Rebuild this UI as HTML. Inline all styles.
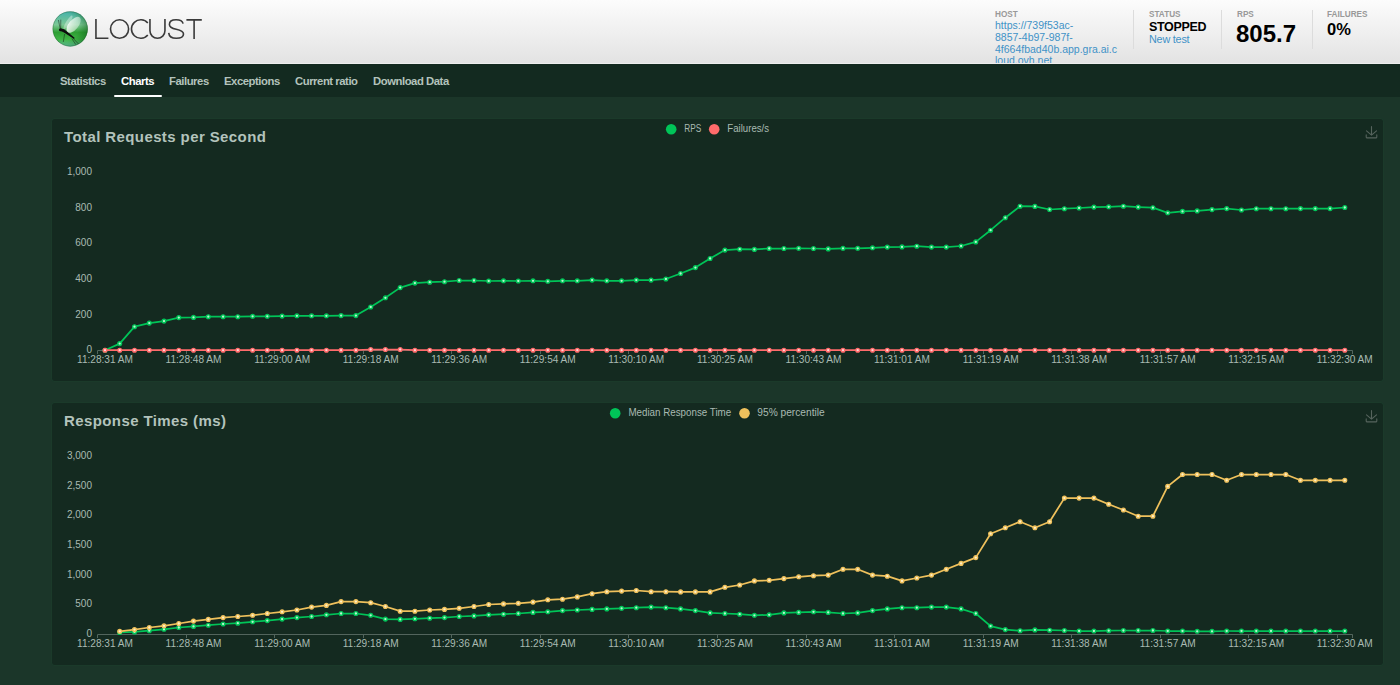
<!DOCTYPE html>
<html><head><meta charset="utf-8">
<style>
*{margin:0;padding:0;box-sizing:border-box}
html,body{width:1400px;height:685px;overflow:hidden}
body{background:#1b3629;font-family:"Liberation Sans",sans-serif;position:relative}
.top{position:absolute;left:0;top:0;width:1400px;height:64px;background:linear-gradient(#fcfcfc,#e3e3e3);overflow:hidden;border-bottom:1px solid #eeeeee}
.logo{position:absolute;left:50px;top:9px}
.wordmark{position:absolute;left:94px;top:17px;overflow:visible}
.box{position:absolute;top:0;height:64px}
.lbl{position:absolute;font-size:8.2px;font-weight:bold;color:#999}
.val{position:absolute;font-weight:bold;color:#000;white-space:nowrap}
.host{position:absolute;left:995px;top:20px;width:140px;font-size:10.5px;line-height:11.8px;color:#4192c7;white-space:nowrap}
.div{position:absolute;top:10px;width:1px;height:39px;background:#dcdcdc}
.nav{position:absolute;left:0;top:64px;width:1400px;height:33px;background:#132a20}
.tab{position:absolute;top:10.5px;font-size:11.3px;font-weight:bold;color:#b3c3bc;white-space:nowrap;letter-spacing:-0.45px}
.tab.on{color:#fff}
.uline{position:absolute;left:114px;top:95px;width:48px;height:2px;background:#fff;border-radius:1px}
.panel{position:absolute;left:52px;width:1331px;height:262px;background:#142a20;border-radius:3px;overflow:hidden;box-shadow:0 0 0 1px rgba(30,75,50,0.2)}
svg text{font-family:"Liberation Sans",sans-serif}
.title{font-size:15px;font-weight:bold;fill:#b3c3bc;letter-spacing:0.4px}
.yl{font-size:10px;fill:#a9bab2;text-anchor:end}
.xl{font-size:10.1px;fill:#a9bab2;text-anchor:middle}
.lg{font-size:10px;fill:#a9bab2}
</style></head><body>
<div class="top">
  <svg class="logo" width="40" height="40" viewBox="0 0 40 40">
    <defs>
      <linearGradient id="sph" x1="0" y1="0" x2="0" y2="1">
        <stop offset="0" stop-color="#45b3ae"/>
        <stop offset="0.22" stop-color="#66bf9c"/>
        <stop offset="0.38" stop-color="#7cc896"/>
        <stop offset="0.6" stop-color="#2e9e33"/>
        <stop offset="0.8" stop-color="#3fb545"/>
        <stop offset="0.92" stop-color="#5cc384"/>
        <stop offset="1" stop-color="#6ccdb0"/>
      </linearGradient>
      <radialGradient id="shd" cx="0.35" cy="0.45" r="0.7">
        <stop offset="0.55" stop-color="#0b5d16" stop-opacity="0"/>
        <stop offset="1" stop-color="#0b5d16" stop-opacity="0.55"/>
      </radialGradient>
      <linearGradient id="wng" x1="0" y1="1" x2="1" y2="0">
        <stop offset="0" stop-color="#ffffff" stop-opacity="0.95"/>
        <stop offset="1" stop-color="#e6f6e6" stop-opacity="0.35"/>
      </linearGradient>
    </defs>
    <circle cx="20.2" cy="19.9" r="17.5" fill="url(#sph)"/>
    <circle cx="20.2" cy="19.9" r="17.5" fill="url(#shd)"/>
    <circle cx="20.2" cy="19.9" r="17.3" fill="none" stroke="#0e4a1c" stroke-opacity="0.55" stroke-width="0.6"/>
    <ellipse cx="23.6" cy="15.8" rx="4.8" ry="9.6" transform="rotate(40 23.6 15.8)" fill="url(#wng)"/>
    <ellipse cx="18" cy="13.5" rx="2" ry="8" transform="rotate(32 18 13.5)" fill="#ffffff" fill-opacity="0.35"/>
    <g fill="#0d0d0d">
      <ellipse cx="10.5" cy="20.8" rx="1.6" ry="1.5"/>
      <path d="M10.8 19.5 L14.2 20.3 L16 21.8 L24.6 28.7 L24.1 29.9 L15.2 24.3 L13 23 L10.4 22 Z"/>
    </g>
    <g stroke="#0d0d0d" fill="none" stroke-width="0.45">
      <path d="M10.2 19.6 L8.4 11 M10.7 19.5 L10.8 10.6 M23 29.2 L28.5 35 M21.8 29.5 L25.8 35.6 M14.6 25 L13.3 33"/>
    </g>
  </svg>
  <svg class="wordmark" width="112" height="24" viewBox="0 -0.4 112 24">
    <g fill="none" stroke="#3a3a3a" stroke-width="1.6">
      <path d="M1.95 1.6V20.9H14.4"/>
      <ellipse cx="25.55" cy="11.65" rx="9.05" ry="9.25"/>
      <path d="M53.8 5.7A9.25 9.25 0 1 0 53.8 17.6"/>
      <path d="M55.95 1.6V13.4A7.5 7.5 0 0 0 70.95 13.4V1.6"/>
      <path d="M89.1 6.2C88.4 3.5 85.8 2.4 82.1 2.4C78.1 2.4 75.4 4.2 75.4 7C75.4 9.8 78 10.9 82.2 11.8C86.9 12.8 89.5 14.2 89.5 16.6C89.5 19.3 86.6 20.9 82.3 20.9C77.9 20.9 75.1 18.9 74.7 15.4"/>
      <path d="M92.4 2.45H107.8M100.1 2.45V21.7"/>
    </g>
  </svg>
  <div class="lbl" style="left:995px;top:10px">HOST</div>
  <div class="host">https://739f53ac-<br>8857-4b97-987f-<br>4f664fbad40b.app.gra.ai.c<br>loud.ovh.net</div>
  <div class="div" style="left:1133px"></div>
  <div class="lbl" style="left:1149px;top:10px">STATUS</div>
  <div class="val" style="left:1149px;top:19.5px;font-size:12.5px;letter-spacing:-0.33px">STOPPED</div>
  <div class="val" style="left:1149px;top:33.1px;font-size:10.8px;font-weight:normal;color:#4192c7;letter-spacing:-0.2px">New test</div>
  <div class="div" style="left:1221px"></div>
  <div class="lbl" style="left:1237px;top:10px">RPS</div>
  <div class="val" style="left:1236px;top:20.2px;font-size:24px">805.7</div>
  <div class="div" style="left:1312px"></div>
  <div class="lbl" style="left:1327px;top:10px">FAILURES</div>
  <div class="val" style="left:1327px;top:19.6px;font-size:16.5px">0%</div>
</div>
<div class="nav">
  <div class="tab" style="left:60px">Statistics</div>
  <div class="tab on" style="left:121px">Charts</div>
  <div class="tab" style="left:169px">Failures</div>
  <div class="tab" style="left:224px">Exceptions</div>
  <div class="tab" style="left:295px">Current ratio</div>
  <div class="tab" style="left:373px">Download Data</div>
</div>
<div class="uline"></div>
<div class="panel" style="top:119px">
<svg width="1331" height="262" viewBox="0 0 1331 262">
<text x="12" y="23" class="title">Total Requests per Second</text>
<text x="40" y="234.2" class="yl">0</text>
<text x="40" y="198.5" class="yl">200</text>
<text x="40" y="162.9" class="yl">400</text>
<text x="40" y="127.3" class="yl">600</text>
<text x="40" y="91.6" class="yl">800</text>
<text x="40" y="56.0" class="yl">1,000</text>
<path d="M45.6 231.5 H1300.6" stroke="#53655d" stroke-width="1"/>
<path d="M45.5 231.5V235.0M134.5 231.5V235.0M222.5 231.5V235.0M311.5 231.5V235.0M399.5 231.5V235.0M488.5 231.5V235.0M576.5 231.5V235.0M665.5 231.5V235.0M754.5 231.5V235.0M842.5 231.5V235.0M931.5 231.5V235.0M1019.5 231.5V235.0M1108.5 231.5V235.0M1196.5 231.5V235.0M1285.5 231.5V235.0M1300.5 231.5V235.0" stroke="#53655d" stroke-width="1"/>
<text x="53.0" y="244.1" class="xl">11:28:31 AM</text>
<text x="141.5" y="244.1" class="xl">11:28:48 AM</text>
<text x="230.1" y="244.1" class="xl">11:29:00 AM</text>
<text x="318.7" y="244.1" class="xl">11:29:18 AM</text>
<text x="407.2" y="244.1" class="xl">11:29:36 AM</text>
<text x="495.8" y="244.1" class="xl">11:29:54 AM</text>
<text x="584.3" y="244.1" class="xl">11:30:10 AM</text>
<text x="672.9" y="244.1" class="xl">11:30:25 AM</text>
<text x="761.5" y="244.1" class="xl">11:30:43 AM</text>
<text x="850.0" y="244.1" class="xl">11:31:01 AM</text>
<text x="938.6" y="244.1" class="xl">11:31:19 AM</text>
<text x="1027.1" y="244.1" class="xl">11:31:38 AM</text>
<text x="1115.7" y="244.1" class="xl">11:31:57 AM</text>
<text x="1204.3" y="244.1" class="xl">11:32:15 AM</text>
<text x="1292.8" y="244.1" class="xl">11:32:30 AM</text>
<path d="M53.0 231.2 L67.7 224.6 L82.5 207.7 L97.3 204.1 L112.0 202.1 L126.8 198.6 L141.5 198.4 L156.3 197.7 L171.1 197.7 L185.8 197.7 L200.6 197.3 L215.3 197.3 L230.1 197.1 L244.9 196.8 L259.6 196.8 L274.4 196.8 L289.1 196.6 L303.9 196.6 L318.7 188.0 L333.4 178.8 L348.2 168.6 L362.9 164.1 L377.7 163.2 L392.5 162.7 L407.2 161.5 L422.0 161.5 L436.7 162.0 L451.5 161.8 L466.3 162.0 L481.0 161.8 L495.8 162.3 L510.5 161.8 L525.3 161.8 L540.1 161.1 L554.8 161.8 L569.6 161.8 L584.3 161.1 L599.1 161.1 L613.9 160.0 L628.6 154.5 L643.4 148.6 L658.1 139.5 L672.9 131.1 L687.7 130.2 L702.4 130.4 L717.2 129.5 L731.9 129.5 L746.7 129.3 L761.5 129.5 L776.2 129.9 L791.0 129.3 L805.7 129.3 L820.5 128.8 L835.3 128.1 L850.0 127.9 L864.8 127.2 L879.5 128.1 L894.3 128.1 L909.1 127.0 L923.8 122.9 L938.6 111.2 L953.3 98.7 L968.1 87.2 L982.9 87.4 L997.6 90.5 L1012.4 89.7 L1027.1 89.0 L1041.9 88.1 L1056.7 87.8 L1071.4 87.2 L1086.2 88.1 L1100.9 88.7 L1115.7 93.8 L1130.5 92.4 L1145.2 91.9 L1160.0 90.6 L1174.7 89.6 L1189.5 91.0 L1204.3 89.7 L1219.0 89.7 L1233.8 89.7 L1248.5 89.6 L1263.3 89.6 L1278.1 89.6 L1292.8 88.5" fill="none" stroke="#00c458" stroke-width="1.75" stroke-linejoin="round"/><g fill="#b8f5cf" stroke="#00c458" stroke-width="1.4"><circle cx="53.0" cy="231.2" r="1.85"/><circle cx="67.7" cy="224.6" r="1.85"/><circle cx="82.5" cy="207.7" r="1.85"/><circle cx="97.3" cy="204.1" r="1.85"/><circle cx="112.0" cy="202.1" r="1.85"/><circle cx="126.8" cy="198.6" r="1.85"/><circle cx="141.5" cy="198.4" r="1.85"/><circle cx="156.3" cy="197.7" r="1.85"/><circle cx="171.1" cy="197.7" r="1.85"/><circle cx="185.8" cy="197.7" r="1.85"/><circle cx="200.6" cy="197.3" r="1.85"/><circle cx="215.3" cy="197.3" r="1.85"/><circle cx="230.1" cy="197.1" r="1.85"/><circle cx="244.9" cy="196.8" r="1.85"/><circle cx="259.6" cy="196.8" r="1.85"/><circle cx="274.4" cy="196.8" r="1.85"/><circle cx="289.1" cy="196.6" r="1.85"/><circle cx="303.9" cy="196.6" r="1.85"/><circle cx="318.7" cy="188.0" r="1.85"/><circle cx="333.4" cy="178.8" r="1.85"/><circle cx="348.2" cy="168.6" r="1.85"/><circle cx="362.9" cy="164.1" r="1.85"/><circle cx="377.7" cy="163.2" r="1.85"/><circle cx="392.5" cy="162.7" r="1.85"/><circle cx="407.2" cy="161.5" r="1.85"/><circle cx="422.0" cy="161.5" r="1.85"/><circle cx="436.7" cy="162.0" r="1.85"/><circle cx="451.5" cy="161.8" r="1.85"/><circle cx="466.3" cy="162.0" r="1.85"/><circle cx="481.0" cy="161.8" r="1.85"/><circle cx="495.8" cy="162.3" r="1.85"/><circle cx="510.5" cy="161.8" r="1.85"/><circle cx="525.3" cy="161.8" r="1.85"/><circle cx="540.1" cy="161.1" r="1.85"/><circle cx="554.8" cy="161.8" r="1.85"/><circle cx="569.6" cy="161.8" r="1.85"/><circle cx="584.3" cy="161.1" r="1.85"/><circle cx="599.1" cy="161.1" r="1.85"/><circle cx="613.9" cy="160.0" r="1.85"/><circle cx="628.6" cy="154.5" r="1.85"/><circle cx="643.4" cy="148.6" r="1.85"/><circle cx="658.1" cy="139.5" r="1.85"/><circle cx="672.9" cy="131.1" r="1.85"/><circle cx="687.7" cy="130.2" r="1.85"/><circle cx="702.4" cy="130.4" r="1.85"/><circle cx="717.2" cy="129.5" r="1.85"/><circle cx="731.9" cy="129.5" r="1.85"/><circle cx="746.7" cy="129.3" r="1.85"/><circle cx="761.5" cy="129.5" r="1.85"/><circle cx="776.2" cy="129.9" r="1.85"/><circle cx="791.0" cy="129.3" r="1.85"/><circle cx="805.7" cy="129.3" r="1.85"/><circle cx="820.5" cy="128.8" r="1.85"/><circle cx="835.3" cy="128.1" r="1.85"/><circle cx="850.0" cy="127.9" r="1.85"/><circle cx="864.8" cy="127.2" r="1.85"/><circle cx="879.5" cy="128.1" r="1.85"/><circle cx="894.3" cy="128.1" r="1.85"/><circle cx="909.1" cy="127.0" r="1.85"/><circle cx="923.8" cy="122.9" r="1.85"/><circle cx="938.6" cy="111.2" r="1.85"/><circle cx="953.3" cy="98.7" r="1.85"/><circle cx="968.1" cy="87.2" r="1.85"/><circle cx="982.9" cy="87.4" r="1.85"/><circle cx="997.6" cy="90.5" r="1.85"/><circle cx="1012.4" cy="89.7" r="1.85"/><circle cx="1027.1" cy="89.0" r="1.85"/><circle cx="1041.9" cy="88.1" r="1.85"/><circle cx="1056.7" cy="87.8" r="1.85"/><circle cx="1071.4" cy="87.2" r="1.85"/><circle cx="1086.2" cy="88.1" r="1.85"/><circle cx="1100.9" cy="88.7" r="1.85"/><circle cx="1115.7" cy="93.8" r="1.85"/><circle cx="1130.5" cy="92.4" r="1.85"/><circle cx="1145.2" cy="91.9" r="1.85"/><circle cx="1160.0" cy="90.6" r="1.85"/><circle cx="1174.7" cy="89.6" r="1.85"/><circle cx="1189.5" cy="91.0" r="1.85"/><circle cx="1204.3" cy="89.7" r="1.85"/><circle cx="1219.0" cy="89.7" r="1.85"/><circle cx="1233.8" cy="89.7" r="1.85"/><circle cx="1248.5" cy="89.6" r="1.85"/><circle cx="1263.3" cy="89.6" r="1.85"/><circle cx="1278.1" cy="89.6" r="1.85"/><circle cx="1292.8" cy="88.5" r="1.85"/></g><path d="M53.0 231.2 L67.7 231.2 L82.5 231.2 L97.3 231.2 L112.0 231.2 L126.8 231.2 L141.5 231.2 L156.3 231.2 L171.1 231.2 L185.8 231.2 L200.6 231.2 L215.3 231.2 L230.1 231.2 L244.9 231.2 L259.6 231.2 L274.4 231.2 L289.1 231.2 L303.9 231.2 L318.7 230.5 L333.4 230.5 L348.2 230.5 L362.9 231.2 L377.7 231.2 L392.5 231.2 L407.2 231.2 L422.0 231.2 L436.7 231.2 L451.5 231.2 L466.3 231.2 L481.0 231.2 L495.8 231.2 L510.5 231.2 L525.3 231.2 L540.1 231.2 L554.8 231.2 L569.6 231.2 L584.3 231.2 L599.1 231.2 L613.9 231.2 L628.6 231.2 L643.4 231.2 L658.1 231.2 L672.9 231.2 L687.7 231.2 L702.4 231.2 L717.2 231.2 L731.9 231.2 L746.7 231.2 L761.5 231.2 L776.2 231.2 L791.0 231.2 L805.7 231.2 L820.5 231.2 L835.3 231.2 L850.0 231.2 L864.8 231.2 L879.5 231.2 L894.3 231.2 L909.1 231.2 L923.8 231.2 L938.6 231.2 L953.3 231.2 L968.1 231.2 L982.9 231.2 L997.6 231.2 L1012.4 231.2 L1027.1 231.2 L1041.9 231.2 L1056.7 231.2 L1071.4 231.2 L1086.2 231.2 L1100.9 231.2 L1115.7 231.2 L1130.5 231.2 L1145.2 231.2 L1160.0 231.2 L1174.7 231.2 L1189.5 231.2 L1204.3 231.2 L1219.0 231.2 L1233.8 231.2 L1248.5 231.2 L1263.3 231.2 L1278.1 231.2 L1292.8 231.2" fill="none" stroke="#ff6b6b" stroke-width="1.75" stroke-linejoin="round"/><g fill="#ffd6d6" stroke="#ff6b6b" stroke-width="1.4"><circle cx="53.0" cy="231.2" r="1.85"/><circle cx="67.7" cy="231.2" r="1.85"/><circle cx="82.5" cy="231.2" r="1.85"/><circle cx="97.3" cy="231.2" r="1.85"/><circle cx="112.0" cy="231.2" r="1.85"/><circle cx="126.8" cy="231.2" r="1.85"/><circle cx="141.5" cy="231.2" r="1.85"/><circle cx="156.3" cy="231.2" r="1.85"/><circle cx="171.1" cy="231.2" r="1.85"/><circle cx="185.8" cy="231.2" r="1.85"/><circle cx="200.6" cy="231.2" r="1.85"/><circle cx="215.3" cy="231.2" r="1.85"/><circle cx="230.1" cy="231.2" r="1.85"/><circle cx="244.9" cy="231.2" r="1.85"/><circle cx="259.6" cy="231.2" r="1.85"/><circle cx="274.4" cy="231.2" r="1.85"/><circle cx="289.1" cy="231.2" r="1.85"/><circle cx="303.9" cy="231.2" r="1.85"/><circle cx="318.7" cy="230.5" r="1.85"/><circle cx="333.4" cy="230.5" r="1.85"/><circle cx="348.2" cy="230.5" r="1.85"/><circle cx="362.9" cy="231.2" r="1.85"/><circle cx="377.7" cy="231.2" r="1.85"/><circle cx="392.5" cy="231.2" r="1.85"/><circle cx="407.2" cy="231.2" r="1.85"/><circle cx="422.0" cy="231.2" r="1.85"/><circle cx="436.7" cy="231.2" r="1.85"/><circle cx="451.5" cy="231.2" r="1.85"/><circle cx="466.3" cy="231.2" r="1.85"/><circle cx="481.0" cy="231.2" r="1.85"/><circle cx="495.8" cy="231.2" r="1.85"/><circle cx="510.5" cy="231.2" r="1.85"/><circle cx="525.3" cy="231.2" r="1.85"/><circle cx="540.1" cy="231.2" r="1.85"/><circle cx="554.8" cy="231.2" r="1.85"/><circle cx="569.6" cy="231.2" r="1.85"/><circle cx="584.3" cy="231.2" r="1.85"/><circle cx="599.1" cy="231.2" r="1.85"/><circle cx="613.9" cy="231.2" r="1.85"/><circle cx="628.6" cy="231.2" r="1.85"/><circle cx="643.4" cy="231.2" r="1.85"/><circle cx="658.1" cy="231.2" r="1.85"/><circle cx="672.9" cy="231.2" r="1.85"/><circle cx="687.7" cy="231.2" r="1.85"/><circle cx="702.4" cy="231.2" r="1.85"/><circle cx="717.2" cy="231.2" r="1.85"/><circle cx="731.9" cy="231.2" r="1.85"/><circle cx="746.7" cy="231.2" r="1.85"/><circle cx="761.5" cy="231.2" r="1.85"/><circle cx="776.2" cy="231.2" r="1.85"/><circle cx="791.0" cy="231.2" r="1.85"/><circle cx="805.7" cy="231.2" r="1.85"/><circle cx="820.5" cy="231.2" r="1.85"/><circle cx="835.3" cy="231.2" r="1.85"/><circle cx="850.0" cy="231.2" r="1.85"/><circle cx="864.8" cy="231.2" r="1.85"/><circle cx="879.5" cy="231.2" r="1.85"/><circle cx="894.3" cy="231.2" r="1.85"/><circle cx="909.1" cy="231.2" r="1.85"/><circle cx="923.8" cy="231.2" r="1.85"/><circle cx="938.6" cy="231.2" r="1.85"/><circle cx="953.3" cy="231.2" r="1.85"/><circle cx="968.1" cy="231.2" r="1.85"/><circle cx="982.9" cy="231.2" r="1.85"/><circle cx="997.6" cy="231.2" r="1.85"/><circle cx="1012.4" cy="231.2" r="1.85"/><circle cx="1027.1" cy="231.2" r="1.85"/><circle cx="1041.9" cy="231.2" r="1.85"/><circle cx="1056.7" cy="231.2" r="1.85"/><circle cx="1071.4" cy="231.2" r="1.85"/><circle cx="1086.2" cy="231.2" r="1.85"/><circle cx="1100.9" cy="231.2" r="1.85"/><circle cx="1115.7" cy="231.2" r="1.85"/><circle cx="1130.5" cy="231.2" r="1.85"/><circle cx="1145.2" cy="231.2" r="1.85"/><circle cx="1160.0" cy="231.2" r="1.85"/><circle cx="1174.7" cy="231.2" r="1.85"/><circle cx="1189.5" cy="231.2" r="1.85"/><circle cx="1204.3" cy="231.2" r="1.85"/><circle cx="1219.0" cy="231.2" r="1.85"/><circle cx="1233.8" cy="231.2" r="1.85"/><circle cx="1248.5" cy="231.2" r="1.85"/><circle cx="1263.3" cy="231.2" r="1.85"/><circle cx="1278.1" cy="231.2" r="1.85"/><circle cx="1292.8" cy="231.2" r="1.85"/></g>
<circle cx="619.2" cy="10.2" r="5.3" fill="#00c458"/><text x="632.3" y="12.8" class="lg" textLength="17" lengthAdjust="spacingAndGlyphs">RPS</text><circle cx="662.2" cy="10.2" r="5.3" fill="#ff6b6b"/><text x="675.3" y="12.8" class="lg" textLength="41.8" lengthAdjust="spacingAndGlyphs">Failures/s</text>
<g fill="none" stroke="#56645d" stroke-width="1.1" transform="translate(0 0.7)" stroke-linecap="round" stroke-linejoin="round"><path d="M1319.5 6.8V15.2M1314.5 11.2L1319.5 15.4L1324.5 11.2M1314.2 15.2V17.2Q1314.2 18.2 1315.2 18.2H1323.8Q1324.8 18.2 1324.8 17.2V15.2"/></g>
</svg>
</div>
<div class="panel" style="top:403px">
<svg width="1331" height="262" viewBox="0 0 1331 262">
<text x="12" y="23" class="title">Response Times (ms)</text>
<text x="40" y="233.8" class="yl">0</text>
<text x="40" y="204.2" class="yl">500</text>
<text x="40" y="174.6" class="yl">1,000</text>
<text x="40" y="145.0" class="yl">1,500</text>
<text x="40" y="115.4" class="yl">2,000</text>
<text x="40" y="85.8" class="yl">2,500</text>
<text x="40" y="56.2" class="yl">3,000</text>
<path d="M45.6 231.5 H1300.6" stroke="#53655d" stroke-width="1"/>
<path d="M45.5 231.5V235.0M134.5 231.5V235.0M222.5 231.5V235.0M311.5 231.5V235.0M399.5 231.5V235.0M488.5 231.5V235.0M576.5 231.5V235.0M665.5 231.5V235.0M754.5 231.5V235.0M842.5 231.5V235.0M931.5 231.5V235.0M1019.5 231.5V235.0M1108.5 231.5V235.0M1196.5 231.5V235.0M1285.5 231.5V235.0M1300.5 231.5V235.0" stroke="#53655d" stroke-width="1"/>
<text x="53.0" y="244.1" class="xl">11:28:31 AM</text>
<text x="141.5" y="244.1" class="xl">11:28:48 AM</text>
<text x="230.1" y="244.1" class="xl">11:29:00 AM</text>
<text x="318.7" y="244.1" class="xl">11:29:18 AM</text>
<text x="407.2" y="244.1" class="xl">11:29:36 AM</text>
<text x="495.8" y="244.1" class="xl">11:29:54 AM</text>
<text x="584.3" y="244.1" class="xl">11:30:10 AM</text>
<text x="672.9" y="244.1" class="xl">11:30:25 AM</text>
<text x="761.5" y="244.1" class="xl">11:30:43 AM</text>
<text x="850.0" y="244.1" class="xl">11:31:01 AM</text>
<text x="938.6" y="244.1" class="xl">11:31:19 AM</text>
<text x="1027.1" y="244.1" class="xl">11:31:38 AM</text>
<text x="1115.7" y="244.1" class="xl">11:31:57 AM</text>
<text x="1204.3" y="244.1" class="xl">11:32:15 AM</text>
<text x="1292.8" y="244.1" class="xl">11:32:30 AM</text>
<path d="M67.7 229.5 L82.5 228.9 L97.3 227.7 L112.0 226.3 L126.8 224.5 L141.5 223.4 L156.3 222.2 L171.1 221.0 L185.8 220.2 L200.6 218.8 L215.3 217.6 L230.1 216.1 L244.9 214.6 L259.6 213.5 L274.4 211.8 L289.1 210.5 L303.9 210.5 L318.7 212.3 L333.4 216.1 L348.2 216.4 L362.9 215.8 L377.7 215.2 L392.5 214.6 L407.2 213.5 L422.0 212.9 L436.7 211.8 L451.5 211.2 L466.3 210.5 L481.0 209.4 L495.8 208.8 L510.5 207.6 L525.3 207.0 L540.1 206.4 L554.8 205.9 L569.6 205.3 L584.3 204.7 L599.1 204.1 L613.9 204.7 L628.6 205.9 L643.4 207.6 L658.1 209.9 L672.9 210.5 L687.7 211.2 L702.4 212.3 L717.2 211.8 L731.9 209.9 L746.7 209.4 L761.5 208.8 L776.2 209.4 L791.0 210.5 L805.7 209.9 L820.5 207.6 L835.3 205.9 L850.0 204.7 L864.8 204.7 L879.5 204.1 L894.3 204.1 L909.1 205.9 L923.8 210.5 L938.6 223.1 L953.3 226.6 L968.1 227.7 L982.9 226.9 L997.6 227.2 L1012.4 227.5 L1027.1 228.0 L1041.9 228.0 L1056.7 227.7 L1071.4 227.5 L1086.2 227.5 L1100.9 227.5 L1115.7 228.0 L1130.5 228.0 L1145.2 228.3 L1160.0 228.3 L1174.7 228.0 L1189.5 228.0 L1204.3 228.0 L1219.0 228.0 L1233.8 228.0 L1248.5 228.0 L1263.3 228.0 L1278.1 228.0 L1292.8 228.0" fill="none" stroke="#00c458" stroke-width="1.75" stroke-linejoin="round"/><g fill="#b8f5cf" stroke="#00c458" stroke-width="1.4"><circle cx="67.7" cy="229.5" r="1.85"/><circle cx="82.5" cy="228.9" r="1.85"/><circle cx="97.3" cy="227.7" r="1.85"/><circle cx="112.0" cy="226.3" r="1.85"/><circle cx="126.8" cy="224.5" r="1.85"/><circle cx="141.5" cy="223.4" r="1.85"/><circle cx="156.3" cy="222.2" r="1.85"/><circle cx="171.1" cy="221.0" r="1.85"/><circle cx="185.8" cy="220.2" r="1.85"/><circle cx="200.6" cy="218.8" r="1.85"/><circle cx="215.3" cy="217.6" r="1.85"/><circle cx="230.1" cy="216.1" r="1.85"/><circle cx="244.9" cy="214.6" r="1.85"/><circle cx="259.6" cy="213.5" r="1.85"/><circle cx="274.4" cy="211.8" r="1.85"/><circle cx="289.1" cy="210.5" r="1.85"/><circle cx="303.9" cy="210.5" r="1.85"/><circle cx="318.7" cy="212.3" r="1.85"/><circle cx="333.4" cy="216.1" r="1.85"/><circle cx="348.2" cy="216.4" r="1.85"/><circle cx="362.9" cy="215.8" r="1.85"/><circle cx="377.7" cy="215.2" r="1.85"/><circle cx="392.5" cy="214.6" r="1.85"/><circle cx="407.2" cy="213.5" r="1.85"/><circle cx="422.0" cy="212.9" r="1.85"/><circle cx="436.7" cy="211.8" r="1.85"/><circle cx="451.5" cy="211.2" r="1.85"/><circle cx="466.3" cy="210.5" r="1.85"/><circle cx="481.0" cy="209.4" r="1.85"/><circle cx="495.8" cy="208.8" r="1.85"/><circle cx="510.5" cy="207.6" r="1.85"/><circle cx="525.3" cy="207.0" r="1.85"/><circle cx="540.1" cy="206.4" r="1.85"/><circle cx="554.8" cy="205.9" r="1.85"/><circle cx="569.6" cy="205.3" r="1.85"/><circle cx="584.3" cy="204.7" r="1.85"/><circle cx="599.1" cy="204.1" r="1.85"/><circle cx="613.9" cy="204.7" r="1.85"/><circle cx="628.6" cy="205.9" r="1.85"/><circle cx="643.4" cy="207.6" r="1.85"/><circle cx="658.1" cy="209.9" r="1.85"/><circle cx="672.9" cy="210.5" r="1.85"/><circle cx="687.7" cy="211.2" r="1.85"/><circle cx="702.4" cy="212.3" r="1.85"/><circle cx="717.2" cy="211.8" r="1.85"/><circle cx="731.9" cy="209.9" r="1.85"/><circle cx="746.7" cy="209.4" r="1.85"/><circle cx="761.5" cy="208.8" r="1.85"/><circle cx="776.2" cy="209.4" r="1.85"/><circle cx="791.0" cy="210.5" r="1.85"/><circle cx="805.7" cy="209.9" r="1.85"/><circle cx="820.5" cy="207.6" r="1.85"/><circle cx="835.3" cy="205.9" r="1.85"/><circle cx="850.0" cy="204.7" r="1.85"/><circle cx="864.8" cy="204.7" r="1.85"/><circle cx="879.5" cy="204.1" r="1.85"/><circle cx="894.3" cy="204.1" r="1.85"/><circle cx="909.1" cy="205.9" r="1.85"/><circle cx="923.8" cy="210.5" r="1.85"/><circle cx="938.6" cy="223.1" r="1.85"/><circle cx="953.3" cy="226.6" r="1.85"/><circle cx="968.1" cy="227.7" r="1.85"/><circle cx="982.9" cy="226.9" r="1.85"/><circle cx="997.6" cy="227.2" r="1.85"/><circle cx="1012.4" cy="227.5" r="1.85"/><circle cx="1027.1" cy="228.0" r="1.85"/><circle cx="1041.9" cy="228.0" r="1.85"/><circle cx="1056.7" cy="227.7" r="1.85"/><circle cx="1071.4" cy="227.5" r="1.85"/><circle cx="1086.2" cy="227.5" r="1.85"/><circle cx="1100.9" cy="227.5" r="1.85"/><circle cx="1115.7" cy="228.0" r="1.85"/><circle cx="1130.5" cy="228.0" r="1.85"/><circle cx="1145.2" cy="228.3" r="1.85"/><circle cx="1160.0" cy="228.3" r="1.85"/><circle cx="1174.7" cy="228.0" r="1.85"/><circle cx="1189.5" cy="228.0" r="1.85"/><circle cx="1204.3" cy="228.0" r="1.85"/><circle cx="1219.0" cy="228.0" r="1.85"/><circle cx="1233.8" cy="228.0" r="1.85"/><circle cx="1248.5" cy="228.0" r="1.85"/><circle cx="1263.3" cy="228.0" r="1.85"/><circle cx="1278.1" cy="228.0" r="1.85"/><circle cx="1292.8" cy="228.0" r="1.85"/></g><path d="M67.7 228.3 L82.5 226.6 L97.3 224.5 L112.0 222.8 L126.8 220.5 L141.5 218.1 L156.3 216.4 L171.1 214.6 L185.8 213.5 L200.6 212.3 L215.3 210.5 L230.1 208.8 L244.9 207.0 L259.6 204.1 L274.4 202.4 L289.1 198.6 L303.9 198.6 L318.7 199.7 L333.4 203.5 L348.2 208.2 L362.9 208.2 L377.7 207.0 L392.5 206.4 L407.2 205.3 L422.0 203.5 L436.7 201.5 L451.5 200.9 L466.3 200.3 L481.0 199.1 L495.8 196.8 L510.5 196.2 L525.3 193.9 L540.1 190.7 L554.8 188.7 L569.6 188.1 L584.3 187.5 L599.1 188.7 L613.9 188.7 L628.6 188.9 L643.4 188.9 L658.1 188.9 L672.9 184.3 L687.7 182.0 L702.4 177.9 L717.2 177.3 L731.9 175.6 L746.7 173.8 L761.5 172.7 L776.2 172.1 L791.0 166.3 L805.7 166.3 L820.5 172.1 L835.3 173.2 L850.0 177.9 L864.8 175.0 L879.5 172.1 L894.3 166.3 L909.1 160.4 L923.8 154.6 L938.6 130.7 L953.3 124.8 L968.1 118.7 L982.9 124.8 L997.6 118.7 L1012.4 95.1 L1027.1 95.1 L1041.9 95.1 L1056.7 101.2 L1071.4 107.0 L1086.2 113.2 L1100.9 113.2 L1115.7 83.4 L1130.5 71.5 L1145.2 71.5 L1160.0 71.5 L1174.7 77.3 L1189.5 71.5 L1204.3 71.5 L1219.0 71.5 L1233.8 71.5 L1248.5 77.3 L1263.3 77.3 L1278.1 77.3 L1292.8 77.3" fill="none" stroke="#efc15c" stroke-width="1.75" stroke-linejoin="round"/><g fill="#fff0c8" stroke="#efc15c" stroke-width="1.4"><circle cx="67.7" cy="228.3" r="1.85"/><circle cx="82.5" cy="226.6" r="1.85"/><circle cx="97.3" cy="224.5" r="1.85"/><circle cx="112.0" cy="222.8" r="1.85"/><circle cx="126.8" cy="220.5" r="1.85"/><circle cx="141.5" cy="218.1" r="1.85"/><circle cx="156.3" cy="216.4" r="1.85"/><circle cx="171.1" cy="214.6" r="1.85"/><circle cx="185.8" cy="213.5" r="1.85"/><circle cx="200.6" cy="212.3" r="1.85"/><circle cx="215.3" cy="210.5" r="1.85"/><circle cx="230.1" cy="208.8" r="1.85"/><circle cx="244.9" cy="207.0" r="1.85"/><circle cx="259.6" cy="204.1" r="1.85"/><circle cx="274.4" cy="202.4" r="1.85"/><circle cx="289.1" cy="198.6" r="1.85"/><circle cx="303.9" cy="198.6" r="1.85"/><circle cx="318.7" cy="199.7" r="1.85"/><circle cx="333.4" cy="203.5" r="1.85"/><circle cx="348.2" cy="208.2" r="1.85"/><circle cx="362.9" cy="208.2" r="1.85"/><circle cx="377.7" cy="207.0" r="1.85"/><circle cx="392.5" cy="206.4" r="1.85"/><circle cx="407.2" cy="205.3" r="1.85"/><circle cx="422.0" cy="203.5" r="1.85"/><circle cx="436.7" cy="201.5" r="1.85"/><circle cx="451.5" cy="200.9" r="1.85"/><circle cx="466.3" cy="200.3" r="1.85"/><circle cx="481.0" cy="199.1" r="1.85"/><circle cx="495.8" cy="196.8" r="1.85"/><circle cx="510.5" cy="196.2" r="1.85"/><circle cx="525.3" cy="193.9" r="1.85"/><circle cx="540.1" cy="190.7" r="1.85"/><circle cx="554.8" cy="188.7" r="1.85"/><circle cx="569.6" cy="188.1" r="1.85"/><circle cx="584.3" cy="187.5" r="1.85"/><circle cx="599.1" cy="188.7" r="1.85"/><circle cx="613.9" cy="188.7" r="1.85"/><circle cx="628.6" cy="188.9" r="1.85"/><circle cx="643.4" cy="188.9" r="1.85"/><circle cx="658.1" cy="188.9" r="1.85"/><circle cx="672.9" cy="184.3" r="1.85"/><circle cx="687.7" cy="182.0" r="1.85"/><circle cx="702.4" cy="177.9" r="1.85"/><circle cx="717.2" cy="177.3" r="1.85"/><circle cx="731.9" cy="175.6" r="1.85"/><circle cx="746.7" cy="173.8" r="1.85"/><circle cx="761.5" cy="172.7" r="1.85"/><circle cx="776.2" cy="172.1" r="1.85"/><circle cx="791.0" cy="166.3" r="1.85"/><circle cx="805.7" cy="166.3" r="1.85"/><circle cx="820.5" cy="172.1" r="1.85"/><circle cx="835.3" cy="173.2" r="1.85"/><circle cx="850.0" cy="177.9" r="1.85"/><circle cx="864.8" cy="175.0" r="1.85"/><circle cx="879.5" cy="172.1" r="1.85"/><circle cx="894.3" cy="166.3" r="1.85"/><circle cx="909.1" cy="160.4" r="1.85"/><circle cx="923.8" cy="154.6" r="1.85"/><circle cx="938.6" cy="130.7" r="1.85"/><circle cx="953.3" cy="124.8" r="1.85"/><circle cx="968.1" cy="118.7" r="1.85"/><circle cx="982.9" cy="124.8" r="1.85"/><circle cx="997.6" cy="118.7" r="1.85"/><circle cx="1012.4" cy="95.1" r="1.85"/><circle cx="1027.1" cy="95.1" r="1.85"/><circle cx="1041.9" cy="95.1" r="1.85"/><circle cx="1056.7" cy="101.2" r="1.85"/><circle cx="1071.4" cy="107.0" r="1.85"/><circle cx="1086.2" cy="113.2" r="1.85"/><circle cx="1100.9" cy="113.2" r="1.85"/><circle cx="1115.7" cy="83.4" r="1.85"/><circle cx="1130.5" cy="71.5" r="1.85"/><circle cx="1145.2" cy="71.5" r="1.85"/><circle cx="1160.0" cy="71.5" r="1.85"/><circle cx="1174.7" cy="77.3" r="1.85"/><circle cx="1189.5" cy="71.5" r="1.85"/><circle cx="1204.3" cy="71.5" r="1.85"/><circle cx="1219.0" cy="71.5" r="1.85"/><circle cx="1233.8" cy="71.5" r="1.85"/><circle cx="1248.5" cy="77.3" r="1.85"/><circle cx="1263.3" cy="77.3" r="1.85"/><circle cx="1278.1" cy="77.3" r="1.85"/><circle cx="1292.8" cy="77.3" r="1.85"/></g>
<circle cx="563.2" cy="10.3" r="5.3" fill="#00c458"/><text x="576.4" y="12.9" class="lg" textLength="102.8" lengthAdjust="spacingAndGlyphs">Median Response Time</text><circle cx="692.5" cy="10.3" r="5.3" fill="#efc15c"/><text x="705.3" y="12.9" class="lg" textLength="67.4" lengthAdjust="spacingAndGlyphs">95% percentile</text>
<g fill="none" stroke="#56645d" stroke-width="1.1" transform="translate(0 0.7)" stroke-linecap="round" stroke-linejoin="round"><path d="M1319.5 6.8V15.2M1314.5 11.2L1319.5 15.4L1324.5 11.2M1314.2 15.2V17.2Q1314.2 18.2 1315.2 18.2H1323.8Q1324.8 18.2 1324.8 17.2V15.2"/></g>
</svg>
</div>
</body></html>
